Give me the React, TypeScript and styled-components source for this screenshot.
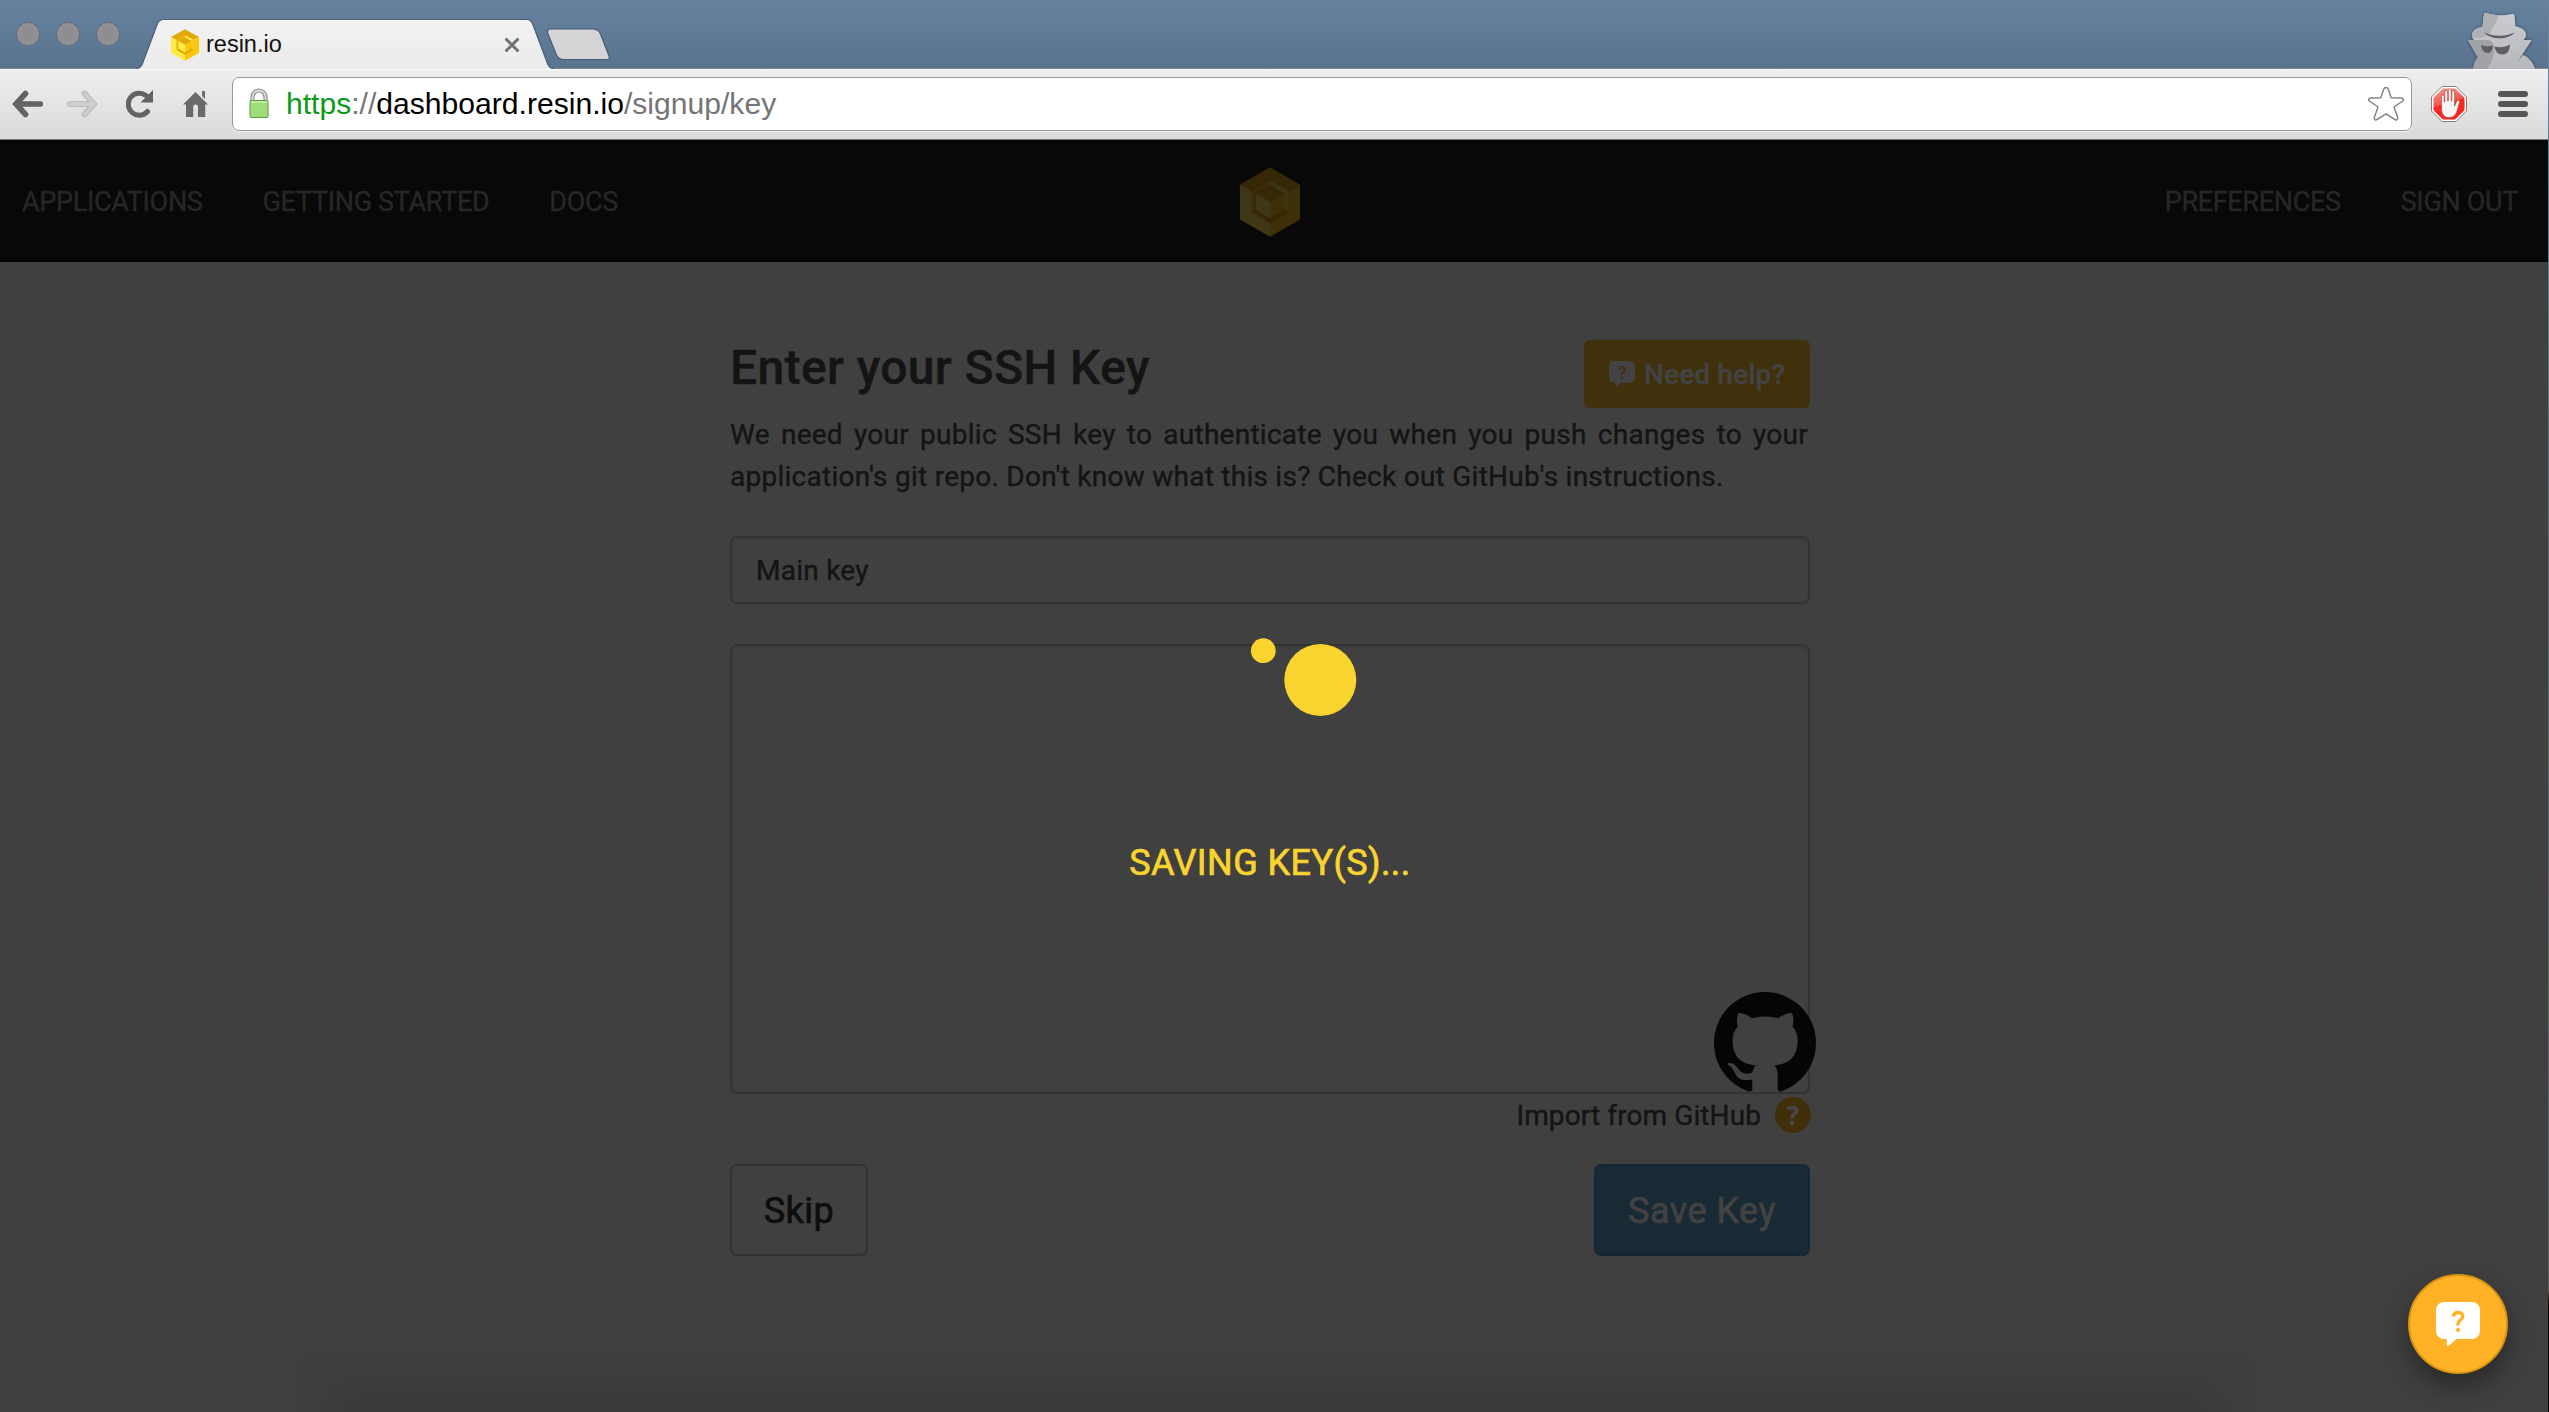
import React from 'react';
import styled, { createGlobalStyle } from 'styled-components';

const GlobalStyle = createGlobalStyle`
  * { box-sizing: border-box; }
  html, body { margin: 0; padding: 0; background: #404040; overflow: hidden; }
  button, input, textarea { font: inherit; letter-spacing: inherit; margin: 0; }
`;

const chromeFont = `"Liberation Sans", Arial, sans-serif`;
const pageFont = `Roboto, "Liberation Sans", sans-serif`;

const Window = styled.div`
  width: 2549px;
  height: 1412px;
  display: flex;
  flex-direction: column;
  overflow: hidden;
  position: relative;
  font-family: ${pageFont};
`;

/* ---------- browser chrome ---------- */

const TabStrip = styled.header`
  height: 69px;
  flex: none;
  display: flex;
  align-items: flex-end;
  background: linear-gradient(#66829f, #5a738f);
  box-shadow: inset 0 -1px 0 #7d868e;
  font-family: ${chromeFont};
`;

const Lights = styled.div`
  display: flex;
  gap: 16px;
  padding-left: 16px;
  width: 136px;
  height: 69px;
  padding-top: 22px;
`;

const Light = styled.span`
  width: 24px;
  height: 24px;
  border-radius: 50%;
  background: radial-gradient(#8b8b8f, #949499);
  border: 1px solid #6a6f7a;
`;

const Tab = styled.div`
  display: flex;
  height: 50px;
  position: relative;
`;

const TabBody = styled.div`
  width: 364px;
  height: 50px;
  display: flex;
  align-items: center;
  background: linear-gradient(#f2f2f2, #ebebeb);
  border-top: 1px solid #4c617c;
  padding: 0 8px 0 8px;
  gap: 7px;
`;

const TabTitle = styled.span`
  flex: 1;
  font-size: 23.5px;
  line-height: 30px;
  color: #111;
  padding-bottom: 1px;
`;

const NewTab = styled.svg`
  align-self: flex-start;
  margin: 28px 0 0 -8px;
`;

const Incognito = styled.svg`
  margin-left: auto;
  margin-right: 11px;
`;

const Toolbar = styled.div`
  height: 71px;
  flex: none;
  display: flex;
  align-items: center;
  padding: 0 20px 2px 12px;
  background: linear-gradient(#eeeeee, #dadada);
  border-top: 1px solid #fafafa;
  border-bottom: 1px solid #777;
`;

const NavIcons = styled.div`
  display: flex;
  width: 220px;
  align-items: center;
`;

const NavIcon = styled.svg<{ $gap?: number }>`
  flex: none;
  margin-right: ${p => p.$gap ?? 0}px;
`;

const UrlBar = styled.div`
  height: 54px;
  width: 2180px;
  display: flex;
  align-items: center;
  background: #fff;
  border: 1px solid #989898;
  border-radius: 7px;
  box-shadow: 0 1px 0 #f2f2f2;
  padding: 0 7px 0 14px;
  font-family: ${chromeFont};
`;

const Url = styled.div`
  flex: 1;
  font-size: 30.1px;
  line-height: 40px;
  color: #757575;
  padding-left: 15px;
`;

const Scheme = styled.span`color: #0b9a18;`;
const Host = styled.span`color: #000;`;

const ToolbarActions = styled.div`
  display: flex;
  align-items: center;
  gap: 31px;
  margin-left: 19px;
`;

/* ---------- page ---------- */

const Page = styled.main`
  flex: 1;
  position: relative;
  background: #404040;
  color: #141415;
  letter-spacing: 0.25px;
  -webkit-text-stroke-width: 0.4px;
`;

const NavBar = styled.nav`
  height: 122px;
  display: grid;
  grid-template-columns: 1fr 60px 1fr;
  align-items: center;
  width: 2548px;
  padding: 3px 30px 0 22px;
  background: #080808;
  border-bottom: 2px solid #020202;
`;

const NavLinks = styled.div<{ $end?: boolean }>`
  display: flex;
  gap: 60px;
  justify-content: ${p => (p.$end ? 'flex-end' : 'flex-start')};
`;

const NavLink = styled.a`
  font-size: 27px;
  line-height: 36px;
  letter-spacing: -0.32px;
  color: #262626;
`;

const Form = styled.section`
  width: 1080px;
  margin: 78px 0 0 730px;
  display: flex;
  flex-direction: column;
`;

const TitleRow = styled.div`
  display: flex;
  justify-content: space-between;
  height: 68px;
`;

const Title = styled.h1`
  margin: 0;
  font-size: 48px;
  line-height: 56px;
  font-weight: 500;
  letter-spacing: 0.37px;
`;

const HelpButton = styled.button`
  width: 226px;
  height: 68px;
  display: flex;
  align-items: center;
  gap: 9px;
  padding: 0 0 0 25px;
  border: 0;
  border-radius: 6px;
  background: #40300b;
  color: #434343;
  font-size: 28px;
  font-weight: 500;
  letter-spacing: 0.15px;
  white-space: nowrap;
`;

const Intro = styled.p`
  margin: 6px 0 0;
  width: 1078px;
  font-size: 28px;
  line-height: 42px;
  letter-spacing: 0.26px;
  text-align: justify;
`;

const KeyName = styled.input`
  margin-top: 38px;
  height: 68px;
  width: 100%;
  padding: 0 24px;
  background: #404040;
  border: 2px solid #333;
  border-radius: 7px;
  box-shadow: inset 0 2px 2px #3c3c3c;
  font-size: 28px;
  color: #141415;
  outline: none;
`;

const KeyArea = styled.div`
  margin-top: 40px;
  height: 450px;
  position: relative;
`;

const KeyText = styled.textarea`
  display: block;
  width: 100%;
  height: 100%;
  background: #404040;
  border: 2px solid #333;
  border-radius: 7px;
  box-shadow: inset 0 2px 2px #3c3c3c;
  resize: none;
  outline: none;
`;

const GithubMark = styled.svg`
  position: absolute;
  right: -6px;
  bottom: 0;
`;

const ImportRow = styled.div`
  display: flex;
  justify-content: flex-end;
  align-items: center;
  gap: 14px;
  height: 42px;
  margin-right: -1px;
  font-size: 28px;
  letter-spacing: 0.1px;
`;

const HintBadge = styled.span`
  width: 36px;
  height: 36px;
  border-radius: 50%;
  display: flex;
  align-items: center;
  justify-content: center;
  background: #412e0b;
  color: #484848;
  font: bold 26px "Open Sans", sans-serif;
  -webkit-text-stroke-width: 0;
`;

const Actions = styled.div`
  margin-top: 28px;
  display: flex;
  justify-content: space-between;
`;

const ActionButton = styled.button<{ $primary?: boolean }>`
  height: 92px;
  width: ${p => (p.$primary ? 216 : 138)}px;
  border: 2px solid ${p => (p.$primary ? '#152736' : '#333')};
  border-radius: 7px;
  background: ${p => (p.$primary ? '#1a2a35' : '#404040')};
  color: ${p => (p.$primary ? '#424242' : '#0d0d0d')};
  font-size: 36px;
  letter-spacing: 0.5px;
  -webkit-text-stroke-width: 0.7px;
  padding: 2px 0 0;
  white-space: nowrap;
`;

const Loader = styled.div`
  position: absolute;
  top: 0;
  left: 0;
  width: 2540px;
  height: 100%;
  display: flex;
  flex-direction: column;
  align-items: center;
  gap: 133px;
  padding-top: 496px;
  pointer-events: none;
`;

const LoaderText = styled.div`
  font-size: 36px;
  line-height: 44px;
  letter-spacing: 0.43px;
  -webkit-text-stroke-width: 0.7px;
  color: #f9d42f;
`;

const ChatButton = styled.button`
  position: absolute;
  left: 2408px;
  top: 1134px;
  width: 100px;
  height: 100px;
  border-radius: 50%;
  border: 2px solid #d9930f;
  background: #ffb225;
  box-shadow: 0 12px 26px rgba(0, 0, 0, 0.38);
  display: flex;
  align-items: center;
  justify-content: center;
  padding: 0;
`;

const BottomShade = styled.div`
  position: absolute;
  left: 290px;
  bottom: 0;
  width: 1970px;
  height: 64px;
  background: linear-gradient(transparent, rgba(0, 0, 0, 0.1));
  mask-image: linear-gradient(90deg, transparent, #000 70px, #000 1900px, transparent);
`;

const WindowEdge = styled.div`
  position: absolute;
  top: 0;
  right: 0;
  width: 1px;
  height: 1412px;
  background: linear-gradient(#5f8aa0 0, #56707c 500px, #5c5c5c 1290px, #1a0e05 1300px, #000 1310px);
`;

interface Palette {
  top: string;
  left: string;
  right: string;
  wallTop: string;
  wallLight: string;
  wallRight: string;
  low: string;
}

const dimmed: Palette = { top: '#362706', left: '#3e3716', right: '#3f2f06', wallTop: '#3b2b06', wallLight: '#3c3516', wallRight: '#3b3312', low: '#362606' };
const bright: Palette = { top: '#e0a80a', left: '#ffeb45', right: '#fdc70c', wallTop: '#eeb40c', wallLight: '#fff04f', wallRight: '#f5d02c', low: '#dda50c' };

const Cube = ({ w, h, c }: { w: number; h: number; c: Palette }) => (
  <svg width={w} height={h} viewBox="180 109 180 209" preserveAspectRatio="none">
    <polygon points="180,161 270,110 360,161 270,212" fill={c.top} />
    <polygon points="180,161 270,212 270,317 180,266" fill={c.left} />
    <polygon points="360,161 360,266 270,317 270,212" fill={c.right} />
    <polygon points="215,181 270,150 270,165 228,188" fill={c.wallTop} />
    <polygon points="270,150 326,181 312,188 270,165" fill={c.wallLight} />
    <polygon points="326,181 326,244 312,237 312,188" fill={c.wallRight} />
    <polygon points="215,181 228,188 228,237 215,244" fill={c.wallTop} />
    <polygon points="215,244 228,237 270,262 312,237 326,244 270,277" fill={c.low} />
    <polygon points="228,188 270,165 312,188 270,212" fill={c.top} />
    <polygon points="228,188 270,212 270,262 228,237" fill={c.left} />
    <polygon points="312,188 312,237 270,262 270,212" fill={c.right} />
  </svg>
);

const HelpBubble = ({ size, fill, mark }: { size: number; fill: string; mark: string }) => (
  <svg width={size} height={size} viewBox="0 0 44 44">
    <path d="M8 0h28a8 8 0 0 1 8 8v21a8 8 0 0 1-8 8H20.500l-7.500 6.500c-1.200 1-2.200.6-2.200-.8V37H8a8 8 0 0 1-8-8V8a8 8 0 0 1 8-8z" fill={fill} />
    <path d="M17.300 14.500c.3-2.500 2-4 4.700-4 2.900 0 4.700 1.600 4.700 3.900 0 3.600-4.700 3.700-4.700 7.400v1.700" fill="none" stroke={mark} strokeWidth="3.400" />
    <circle cx="22" cy="28" r="2.100" fill={mark} />
  </svg>
);

const TabEdge = ({ flip }: { flip?: boolean }) => (
  <svg width="27" height="50" viewBox="0 0 27 50">
    <defs>
      <linearGradient id="tabFill" x1="0" y1="0" x2="0" y2="1">
        <stop offset="0" stopColor="#f2f2f2" />
        <stop offset="1" stopColor="#ebebeb" />
      </linearGradient>
    </defs>
    <g transform={flip ? 'translate(27 0) scale(-1 1)' : undefined}>
      <path d="M0 50c3 0 5-1.500 6.500-5L21 7c1.500-4.500 3-6.500 6-6.500V50z" fill="url(#tabFill)" />
      <path d="M0 49.500c3 0 5-1.500 6.500-5L20.500 7c1.500-4.500 3.500-6.500 6.500-6.500" fill="none" stroke="#4c617c" strokeWidth="1.200" />
    </g>
  </svg>
);

const spyOutline =
  'M44 14.500c0-1.500 1.200-1.700 3-1.200 9 2.500 17 2.700 25 .7 1.700-.4 2.500.2 2.600 1.500l.7 10.500c6 1.500 10.500 4.500 10.700 8.500.1 2-1 3.800-2.500 5.500h8.200L80 58l-2 3.500 5-6.500c6 2.500 10 7.500 12 14H33.500c0-5 1.500-8.500 4.500-11.500L28 40.300h6c-2.500-3-2.500-6.500-.5-9.300 2-2.500 5.500-3.300 9-4z';

export default function App() {
  return (
    <>
      <GlobalStyle />
      <Window>
        <TabStrip>
          <Lights><Light /><Light /><Light /></Lights>
          <Tab>
            <TabEdge />
            <TabBody>
              <Cube w={28} h={32} c={bright} />
              <TabTitle>resin.io</TabTitle>
              <svg width="14" height="14" viewBox="0 0 14 14">
                <path d="M1.500 1.500l11 11M12.500 1.500l-11 11" stroke="#707070" strokeWidth="3" strokeLinecap="round" />
              </svg>
            </TabBody>
            <TabEdge flip />
          </Tab>
          <NewTab width="65" height="33" viewBox="0 0 65 33">
            <path d="M5 1h41c5 0 7 1.500 8.500 5l8.500 22c1 3 0 3.500-3 3.500H18c-4 0-6-1-7.500-4.500L2 6C.8 2.500 1.500 1 5 1z" fill="#d4d4d6" stroke="#475a73" strokeWidth="1.200" />
          </NewTab>
          <Incognito width="72" height="59" viewBox="26 10 72 59">
            <defs>
              <filter id="coat" x="-20%" y="-20%" width="140%" height="140%">
                <feDropShadow dx="0" dy="0.500" stdDeviation="1.600" floodColor="#1c2a3c" floodOpacity="0.900" />
              </filter>
              <linearGradient id="spyLight" x1="0" y1="0" x2="0" y2="1">
                <stop offset="0" stopColor="#cbccd0" />
                <stop offset="1" stopColor="#b6b8bb" />
              </linearGradient>
              <clipPath id="spyClip"><path d={spyOutline} /></clipPath>
            </defs>
            <path d={spyOutline} fill="url(#spyLight)" filter="url(#coat)" />
            <g clipPath="url(#spyClip)">
              <path d="M26 10h34c-1 7-3 10-5 14-1.500 3-4 6-5 9-1.500 4-8 5-24 5z" fill="#aeb0b4" />
              <path d="M26 40h22c4 1 6 4 6 9 0 8-3 14-7 20H26z" fill="#a0a2a6" />
            </g>
            <path d="M44 32.200c10 4.800 21 4.800 31 0-7 8-24 8-31 0z" fill="#5d5f62" />
            <path d="M41 45c4 1.500 8 1.800 12 .5-.6 5-2.500 7.500-5.500 7.500S41.500 50 41 45zM54.500 46.500c5.500 1.500 10.500.8 15.500-2-.3 6.500-3 10-7.500 10s-7.200-3-8-8z" fill="#5d5f62" />
          </Incognito>
        </TabStrip>

        <Toolbar>
          <NavIcons>
            <NavIcon $gap={24} width="31" height="28" viewBox="0 0 31 28">
              <path d="M4 14h24.500M13.500 3.500L4 14l9.500 10.500" fill="none" stroke="#636363" strokeWidth="5.600" strokeLinecap="round" strokeLinejoin="miter" />
            </NavIcon>
            <NavIcon $gap={28} width="31" height="28" viewBox="0 0 31 28">
              <path d="M27 14H2.800M17.500 3.500L27 14l-9.500 10.500" fill="none" stroke="#b4b4b4" strokeWidth="5.600" strokeLinecap="round" />
              <path d="M27 14H2.800M17.500 3.500L27 14l-9.500 10.500" fill="none" stroke="#cecece" strokeWidth="4" strokeLinecap="round" />
            </NavIcon>
            <NavIcon $gap={29} width="28" height="28" viewBox="0 0 28 28">
              <path d="M21.500 21.500A11 11 0 1 1 20 5.500" fill="none" stroke="#636363" strokeWidth="5" strokeLinecap="round" />
              <path d="M27 0v12.500H14.500z" fill="#636363" />
            </NavIcon>
            <NavIcon width="25" height="28" viewBox="0 0 25 28">
              <path d="M12.500 2L0 14.500h3V27h7.200V16.800a2.400 2.400 0 0 1 4.800 0V27h7.200V14.500H25l-4-4z" fill="#6a6a6a" />
              <path d="M19 1h3v8l-3-3z" fill="#6a6a6a" />
            </NavIcon>
          </NavIcons>
          <UrlBar>
            <svg width="24" height="32" viewBox="0 0 24 32">
              <path d="M5.500 13V9a6.500 6.500 0 0 1 13 0v4" fill="none" stroke="#8f8f8f" strokeWidth="4.200" />
              <path d="M5.500 13V9a6.500 6.500 0 0 1 13 0v4" fill="none" stroke="#dedede" strokeWidth="1.800" />
              <rect x="3" y="12.500" width="18" height="17" rx="1" fill="#a0dc79" stroke="#5f9a48" />
              <path d="M4 14h16" stroke="#c6f0a8" strokeWidth="1.500" />
            </svg>
            <Url><Scheme>https</Scheme>://<Host>dashboard.resin.io</Host>/signup/key</Url>
            <svg width="36" height="36" viewBox="0 0 36 36">
              <path d="M18 1.500c1.500 0 2 .8 2.400 2l2.800 8.300 9.600.2c3 .1 3.400 2 1.200 3.500l-8 5.500 3.500 10c.8 2.500-.8 3.800-2.800 2.400L18 27.800l-8.700 5.600c-2 1.400-3.600.1-2.800-2.400L10 21l-8-5.500C-.2 14 .2 12.100 3.200 12l9.600-.2 2.800-8.300c.4-1.200.9-2 2.400-2z" fill="#fff" stroke="#808080" strokeWidth="1.400" strokeLinejoin="round" />
            </svg>
          </UrlBar>
          <ToolbarActions>
            <svg width="36" height="36" viewBox="0 0 36 36">
              <defs>
                <linearGradient id="stop" x1="0" y1="0" x2="0.300" y2="1">
                  <stop offset="0" stopColor="#f59a92" />
                  <stop offset="0.550" stopColor="#f0554c" />
                  <stop offset="0.560" stopColor="#f8271f" />
                  <stop offset="1" stopColor="#f5281f" />
                </linearGradient>
              </defs>
              <path d="M11 .5h14L35.500 11v14L25 35.500H11L.5 25V11z" fill="#fff" stroke="#8d7d7d" />
              <path d="M11.800 2.500h12.400l9.300 9.300v12.400l-9.300 9.300H11.800l-9.300-9.300V11.800z" fill="url(#stop)" />
              <path d="M10.500 22V11c0-2.300 2.700-2.300 2.700 0v5h.6V6.500c0-2.400 2.900-2.400 2.900 0V15h.6V4.800c0-2.400 2.900-2.400 2.900 0V15h.6V6.500c0-2.400 2.800-2.400 2.800 0V20l2-4.500c1-2 3.600-1.400 3 .8-1.200 4-2 7-3.200 10.200-1.300 3.200-3.800 5-7.500 5-4.800 0-7.400-3.200-7.400-9.500z" fill="#f4f4f4" stroke="#b33a34" strokeWidth=".6" />
            </svg>
            <svg width="30" height="28" viewBox="0 0 30 28">
              <rect x="0" y="1" width="30" height="6" rx="3" fill="#555" />
              <rect x="0" y="11" width="30" height="6" rx="3" fill="#555" />
              <rect x="0" y="21" width="30" height="6" rx="3" fill="#555" />
            </svg>
          </ToolbarActions>
        </Toolbar>

        <Page>
          <NavBar>
            <NavLinks>
              <NavLink>APPLICATIONS</NavLink>
              <NavLink>GETTING STARTED</NavLink>
              <NavLink>DOCS</NavLink>
            </NavLinks>
            <Cube w={60} h={70} c={dimmed} />
            <NavLinks $end>
              <NavLink>PREFERENCES</NavLink>
              <NavLink>SIGN OUT</NavLink>
            </NavLinks>
          </NavBar>

          <Form>
            <TitleRow>
              <Title>Enter your SSH Key</Title>
              <HelpButton>
                <HelpBubble size={26} fill="#434343" mark="#40300b" />
                Need help?
              </HelpButton>
            </TitleRow>
            <Intro>
              We need your public SSH key to authenticate you when you push changes to your
              application's git repo. Don't know what this is? Check out GitHub's instructions.
            </Intro>
            <KeyName defaultValue="Main key" />
            <KeyArea>
              <KeyText />
              <GithubMark width="102" height="102" viewBox="0 0 16 16">
                <path fill="#050505" d="M8 0C3.580 0 0 3.580 0 8c0 3.540 2.290 6.530 5.470 7.590.4.070.55-.17.55-.38 0-.19-.01-.82-.01-1.490-2.010.37-2.530-.49-2.690-.94-.09-.23-.48-.94-.82-1.130-.28-.15-.68-.52-.01-.53.63-.01 1.080.58 1.230.82.72 1.210 1.870.87 2.330.66.07-.52.28-.87.51-1.070-1.780-.2-3.640-.89-3.640-3.950 0-.87.31-1.590.82-2.150-.08-.2-.36-1.020.08-2.120 0 0 .67-.21 2.200.82.64-.18 1.320-.27 2-.27s1.360.09 2 .27c1.530-1.040 2.200-.82 2.200-.82.44 1.100.16 1.920.08 2.120.51.56.82 1.270.82 2.150 0 3.070-1.870 3.750-3.650 3.950.29.25.54.73.54 1.480 0 1.070-.01 1.930-.01 2.200 0 .21.15.46.55.38A8.013 8.013 0 0 0 16 8c0-4.420-3.580-8-8-8z" />
              </GithubMark>
            </KeyArea>
            <ImportRow>
              Import from GitHub
              <HintBadge>?</HintBadge>
            </ImportRow>
            <Actions>
              <ActionButton>Skip</ActionButton>
              <ActionButton $primary>Save Key</ActionButton>
            </Actions>
          </Form>

          <BottomShade />
          <Loader>
            <svg width="160" height="72" viewBox="1190 636 160 72" overflow="visible">
              <circle cx="1263.300" cy="650.700" r="12.400" fill="#f9d42f" />
              <circle cx="1320.300" cy="680" r="36" fill="#f9d42f" />
            </svg>
            <LoaderText>SAVING KEY(S)...</LoaderText>
          </Loader>
          <ChatButton aria-label="Help">
            <HelpBubble size={44} fill="#fff" mark="#ffb225" />
          </ChatButton>
        </Page>
        <WindowEdge />
      </Window>
    </>
  );
}
